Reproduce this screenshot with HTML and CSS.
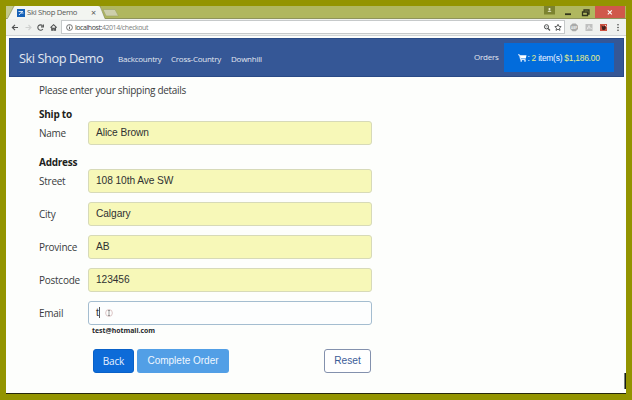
FILE: index.html
```html
<!DOCTYPE html>
<html lang="en">
<head>
<meta charset="utf-8">
<title>Ski Shop Demo</title>
<link rel="stylesheet" href="styles.css">
</head>
<body>
<div class="window">
  <div class="tabstrip">
    <svg class="tabshape" width="119" height="13" viewBox="0 0 119 13"><path d="M0 0H8L1.500 12.500H0Z" fill="#c3c98c"/><path d="M1 13L7.500 1Q8 0 9 0H92Q94 0 95 2L99 13Z" fill="#f3f5f1"/><path d="M0 12.500H1.500L8 0M94 0L99 12.500" fill="none" stroke="#8b9160" stroke-width=".7"/><path d="M97 3.500H109L112.500 10H100Z" fill="#cdcfac" stroke="#9ca264" stroke-width=".6"/></svg>
    <div class="tab">
      <svg width="8" height="8" viewBox="0 0 8 8"><rect width="8" height="8" fill="#1762b7"/><path d="M1.500 2.500H6M4 4H6.500M2 6L5.500 2" stroke="#e8f0fa" stroke-width=".9"/></svg>
      <span class="tabtitle">Ski Shop Demo</span>
      <span class="tabclose">×</span>
    </div>
    <div class="controls">
      <svg width="85" height="13" viewBox="0 0 85 13"><rect x="3" width="11" height="8.500" fill="#7c832f"/><circle cx="8.500" cy="3" r="1.100" fill="#f4f5dc"/><path d="M6.500 5.700Q8.500 3.500 10.500 5.700Z" fill="#f4f5dc"/><path d="M24 8.200H30" stroke="#33351b" stroke-width="1.800"/><path d="M41.500 6H46.500V9.500H41.500ZM43 5.500V4H48V8H47" fill="none" stroke="#33351b" stroke-width="1.300"/><rect x="54" width="30" height="12" fill="#d0584b"/><path d="M66.800 4.300L70.800 8.300M70.800 4.300L66.800 8.300" stroke="#fff" stroke-width="1.100"/></svg>
    </div>
  </div>
  <div class="toolbar">
    <svg class="navicons" width="55" height="17" viewBox="0 0 55 17" fill="none" stroke="#505252" stroke-width="1.100"><path d="M12 8.500H6.500M9 5.800L6.300 8.500L9 11.200"/><path d="M19.500 8.500H25M22.500 6L25 8.500L22.500 11" stroke="#cfd1cf"/><path d="M36.800 10A2.700 2.700 0 1 1 36.500 6.700M37.400 5.500V7.900H35"/><path d="M44.500 8.600L47.600 5.700L50.700 8.600M45.700 8.300V11.200H46.900V9.300H48.300V11.200H49.500V8.300"/></svg>
    <div class="address">
      <svg width="7" height="7" viewBox="0 0 7 7"><circle cx="3.500" cy="3.500" r="2.900" fill="none" stroke="#555" stroke-width=".8"/><path d="M3.500 3V5.200M3.500 1.700V2.400" stroke="#555" stroke-width=".9"/></svg>
      <span class="url"><b>localhost:</b>42014/checkout</span>
      <svg class="urltools" width="22" height="13" viewBox="0 0 22 13" fill="none" stroke="#505252"><circle cx="4.500" cy="5.800" r="2.100"/><path d="M6 7.500L8 9.500" stroke-width="1.300"/><path d="M3.500 5.800H5.500" stroke-width=".6"/><path d="M16 3.300L16.900 5.300L19.200 5.600L17.500 7.100L18 9.400L16 8.200L14 9.400L14.500 7.100L12.800 5.600L15.100 5.300Z" stroke-width=".9"/></svg>
    </div>
    <svg class="extensions" width="61" height="17" viewBox="1 0 61 17"><path d="M8.500 4.500H11.700L14 6.800V10L11.700 12.300H8.500L6.200 10V6.800Z" fill="#a9aaa9"/><text x="10.100" y="9.900" class="badge">ABP</text><rect x="21.500" y="5" width="7" height="7" fill="#bfc0bf"/><path d="M23 10.500L25 6.500L26 9L28 9.500M23 9L26 9" stroke="#eee" stroke-width=".7" fill="none"/><rect x="36" y="5" width="7" height="7" fill="#cd5342"/><path d="M37.500 6L39 7.500L41 6.800L42 9L40.500 11H38.500L37.800 8.500Z" fill="#41211d"/><path d="M41 6L42.500 7.500" stroke="#fff" stroke-width=".8"/><g fill="#464846"><circle cx="54" cy="5.800" r=".8"/><circle cx="54" cy="8.500" r=".8"/><circle cx="54" cy="11.200" r=".8"/></g></svg>
  </div>
  <nav class="navbar">
    <a class="brand">Ski Shop Demo</a>
    <a class="navlink back">Backcountry</a>
    <a class="navlink cross">Cross-Country</a>
    <a class="navlink down">Downhill</a>
    <a class="navlink orders">Orders</a>
    <a class="cart"><svg width="9" height="8" viewBox="0 0 9 8"><path d="M0 .8H1.500L2.600 5.600H7.500" fill="none" stroke="#fff" stroke-width=".9"/><path d="M1.800 1.200H8.500L7.800 4.400H2.500Z" fill="#fff"/><circle cx="3.200" cy="6.900" r=".8" fill="#fff"/><circle cx="7" cy="6.900" r=".8" fill="#fff"/></svg><span>: <i>2</i> item(s) <i>$1,186.00</i></span></a>
  </nav>
  <main class="page">
    <p class="intro">Please enter your shipping details</p>
    <h2>Ship to</h2>
    <div class="row"><label>Name</label><div class="field">Alice Brown</div></div>
    <h2 class="addr">Address</h2>
    <div class="row"><label>Street</label><div class="field">108 10th Ave SW</div></div>
    <div class="row"><label>City</label><div class="field">Calgary</div></div>
    <div class="row"><label>Province</label><div class="field">AB</div></div>
    <div class="row"><label>Postcode</label><div class="field">123456</div></div>
    <div class="row"><label>Email</label><div class="field active">t<span class="caret"></span><svg class="pointer" width="8" height="8" viewBox="0 0 8 8" fill="none"><circle cx="4" cy="4" r="3.400" stroke="#d4b9b9" stroke-width=".8"/><path d="M4 1.500V6.500M3 1.500H5M3 6.500H5" stroke="#777" stroke-width=".7"/></svg></div></div>
    <div class="suggest">test@hotmail.com</div>
    <div class="actions"><div class="btn backbtn">Back</div><div class="btn complete">Complete Order</div><div class="btn reset">Reset</div></div>
  </main>
  <div class="edge"></div>
</div>
</body>
</html>
```
FILE: styles.css
```css
* { box-sizing: border-box; }
body {
  margin: 0;
  width: 632px;
  height: 400px;
  padding: 6px 6px 0;
  overflow: hidden;
  background: #939400;
  font-family: "Open Sans", "Noto Sans", sans-serif;
}
svg { display: block; flex: none; }
.window {
  position: relative;
  width: 620px;
  height: 388px;
  background: #fdfefc;
  border-bottom: 1px solid #24260d;
}
.tabstrip {
  display: flex;
  position: relative;
  height: 13px;
  background: #b0b75f;
  border-bottom: 1px solid #8f945c;
}
.tabshape { position: absolute; left: 0; top: 0; }
.tab {
  position: relative;
  display: flex;
  align-items: center;
  width: 100px;
  height: 13px;
  padding-left: 11px;
  color: #565856;
}
.tabtitle { width: 64px; margin-left: 2px; font-size: 7.7px; letter-spacing: -0.3px; line-height: 13px; white-space: nowrap; }
.tabclose { font-size: 9px; line-height: 12px; }
.controls { margin-left: auto; }
.toolbar { display: flex; align-items: center; height: 17px; background: #eff1ef; border-bottom: 1px solid #d0d4d6; }
.address {
  display: flex;
  align-items: center;
  width: 504px;
  height: 14px;
  padding-left: 4px;
  background: #fff;
  border: 1px solid #c6c9ca;
}
.url { margin-left: 2px; font-size: 7px; letter-spacing: -0.43px; color: #7c7f7f; white-space: nowrap; }
.url b { font-weight: 400; color: #3c3e3e; }
.urltools { margin-left: auto; }
.badge { font-size: 3px; fill: #eee; text-anchor: middle; font-weight: 700; }
.navbar {
  display: flex;
  align-items: center;
  height: 39px;
  margin: 2px 2px 0 3px;
  padding-left: 9px;
  background: #355796;
  border: 1px solid #294a86;
  color: #e2e7f0;
  white-space: nowrap;
}
.brand { width: 99px; font-size: 12.8px; letter-spacing: -0.45px; }
.navlink { font-size: 8px; letter-spacing: -0.24px; padding-top: 1px; }
.back { width: 53px; }
.cross { width: 60px; }
.down { width: 243px; }
.orders { width: 30px; margin-top: -3px; }
.cart {
  display: flex;
  align-items: center;
  justify-content: center;
  width: 110px;
  height: 29px;
  background: #026cdc;
  color: #edf5ff;
  font-family: "Liberation Sans", sans-serif;
  font-size: 8.4px;
  letter-spacing: -0.22px;
}
.cart i { font-style: normal; color: #e4ed8c; }
.page { padding-left: 33px; color: #3a3c3d; font-size: 10px; white-space: nowrap; }
.intro { height: 18px; margin: 4px 0 9px; line-height: 18px; font-size: 10px; letter-spacing: -0.3px; }
h2 { height: 13px; margin: 0; font-size: 10px; letter-spacing: -0.25px; line-height: 13px; color: #1d1f20; }
.row { display: flex; height: 24px; margin-bottom: 9px; }
.addr { height: 12px; margin: 11px 0 1px; }
label { width: 49px; line-height: 25px; font-size: 10px; letter-spacing: -0.25px; }
.field {
  display: flex;
  align-items: center;
  width: 284px;
  height: 24px;
  padding: 0 7px 1px;
  background: #f7f8b8;
  border: 1px solid #d7dab8;
  border-radius: 3px;
  color: #2f3132;
  font-family: "Liberation Sans", sans-serif;
  font-size: 10.2px;
  letter-spacing: -0.08px;
}
.active { background: #fdfefe; border-color: #a4bdd0; }
.caret { width: 1px; height: 11px; background: #555; }
.pointer { margin-left: 5px; }
.suggest { height: 12px; margin: -9px 0 12px 53px; font-size: 6.9px; line-height: 12px; font-weight: 700; color: #25272a; }
.actions { display: flex; margin-left: 54px; }
.btn { height: 24px; border-radius: 3px; line-height: 24px; text-align: center; }
.backbtn { width: 41px; background: #0d6bd8; border: 1px solid #0961c8; line-height: 23px; letter-spacing: -0.2px; color: #e8f2ff; }
.complete { width: 92px; margin-left: 3px; background: #529fe6; color: #f0f7ff; font: 10px/23px "Liberation Sans", sans-serif; }
.reset { width: 47px; margin-left: 95px; border: 1px solid #8391ad; color: #3c5c98; font: 10.2px/21px "Liberation Sans", sans-serif; background: #fff; }
.edge { position: absolute; right: 0; top: 367px; width: 2px; height: 16px; background: #171b19; border-left: 1px solid #778078; }
```
